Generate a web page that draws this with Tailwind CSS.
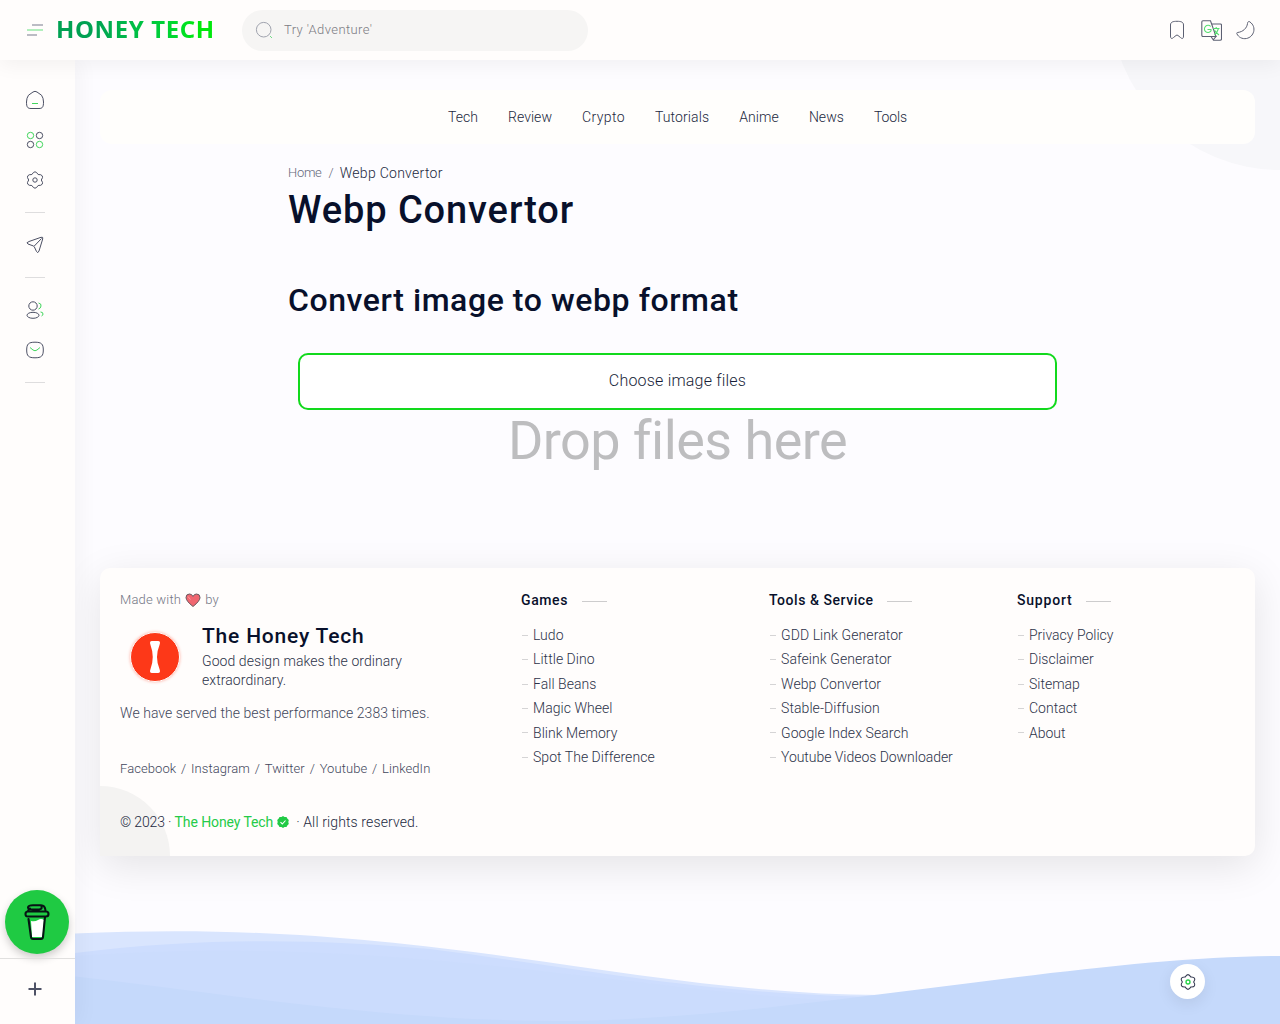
<!DOCTYPE html>
<html lang="en">
<head>
<meta charset="utf-8">
<title>Webp Convertor</title>
<script src="https://cdn.jsdelivr.net/npm/@tailwindcss/browser@4"></script>
</head>
<body class="relative h-screen overflow-hidden bg-[#fdfcff] font-['Roboto',sans-serif] text-sm font-light text-[#08102b]">
<!-- page decoration -->
<div class="absolute top-0 right-0 size-[170px] rounded-bl-full bg-[#f7f7fa]"></div>
<svg class="absolute bottom-0 left-[75px]" width="1205" height="100" viewBox="75 924 1205 100">
  <path fill="#d9e5fe" d="M75 933.5C230 927 350 935 510 957C640 975 760 995 880 995V1024H75Z"/>
  <path fill="#cdddfe" d="M75 953C210 936 330 940 430 949C580 968 700 994 880 997V1024H75Z"/>
  <path fill="#cbdcfd" d="M75 956C300 940 480 964 620 980C720 992 800 1000 860 1001V1024H75Z"/>
  <path fill="#c5d9fb" d="M75 976.5C200 990 380 1021 555 1021C780 1021 1080 956 1280 956V1024H75Z"/>
</svg>

<div class="flex h-full flex-col">
<header class="relative z-20 flex h-[60px] shrink-0 items-center bg-[#fffdfc] shadow-[0_5px_20px_rgba(0,0,0,0.05)]">
  <svg class="ml-[26px]" width="18" height="14" viewBox="0 0 18 14" fill="none" stroke-width="1.7"><path d="M6 2H17M1 12H11" stroke="#a5a7b1"/><path d="M1 7H17" stroke="#a5ecb2"/></svg>
  <h2 class="ml-3 w-[186px] bg-linear-to-r from-[#00a152] from-20% to-[#00e80c] to-75% bg-clip-text pb-0.5 font-['Noto_Sans'] text-2xl font-bold tracking-[0.62px] whitespace-nowrap text-transparent">HONEY TECH</h2>
  <div class="flex h-[41px] w-[346px] items-center rounded-full bg-[#f6f5f4] pl-[13px]">
    <svg width="18" height="18" viewBox="0 0 18 18" fill="none"><circle cx="8.7" cy="8.7" r="7.3" stroke="#a0a3ae"/><path d="M15 15L17 17" stroke="#70dc85"/></svg>
    <span class="ml-[11px] text-[13px] tracking-[0.4px] text-[#7b7b82]">Try 'Adventure'</span>
  </div>
  <div class="ml-auto mr-6 flex items-center gap-[13px] text-[#5c6072]">
    <svg width="22" height="22" viewBox="0 0 22 22" fill="none" stroke="currentColor" stroke-width="1"><path d="M4.500 17V6C4.500 3 7 2.300 11 2.300S17.500 3 17.500 6V17C17.500 20 16 20 14.500 18.500L12 16.500Q11 15.500 10 16.500L7.500 18.500C6 20 4.500 20 4.500 17Z"/></svg>
    <svg width="21" height="21" viewBox="0 0 21 21" fill="none" stroke-width="1.100"><path stroke="currentColor" d="M10.500 4H19.500Q20.500 4 20.500 5V19Q20.500 20.300 19 20.300H12.500L10 16.500M12 20L15 16.500H2Q.8 16.500.8 15V2Q.8.7 2 .7H9.500L15 16.500"/><path stroke="#55de70" d="M9.700 6.500A3.600 3.600 0 1 0 9.800 11.200Q10.300 10.500 10 9.500H6.500M12 8.500H18.500M15.200 7V8.500M17.500 8.500Q16 13 13.500 15M13.500 10Q15 13 18 15"/></svg>
    <svg width="21" height="20" viewBox="0 0 21 20" fill="none" stroke="currentColor" stroke-width="1"><path d="M2.500 12.500C8 12 12 8 12.500 3.500C12.700 1.500 14 1 15 2C22 7 19 17 11.500 18.500C7 19.300 3.500 17 2 14C1.500 13 1.700 12.600 2.500 12.500Z"/></svg>
  </div>
</header>

<div class="flex min-h-0 flex-1">
<aside class="relative z-10 flex w-[75px] shrink-0 flex-col bg-[#fffdfc] text-[#4c5064] shadow-[5px_0_20px_rgba(0,0,0,0.04)]">
  <nav class="flex w-[70px] flex-col items-center pt-[30px]">
    <svg class="mb-5" width="20" height="20" viewBox="0 0 20 20" fill="none"><path stroke="currentColor" d="M3.500 5.200L8 2Q10 .6 12 2L16.500 5.200Q18.500 8 18.500 12C18.500 17 17.500 18.500 14 18.500H6C2.500 18.500 1.500 17 1.500 12Q1.500 8 3.500 5.200Z"/><path stroke="#42d65d" d="M7 13.500H13"/></svg>
    <svg class="mb-5" width="20" height="20" viewBox="0 0 20 20" fill="none"><g stroke="#42d65d"><circle cx="5.500" cy="5.500" r="3.200"/><circle cx="14.500" cy="14.500" r="3.200"/></g><g stroke="currentColor"><circle cx="14.500" cy="5.500" r="3.200"/><circle cx="5.500" cy="14.500" r="3.200"/></g></svg>
    <svg width="20" height="20" viewBox="0 0 20 20" fill="none" stroke="currentColor"><path d="M10 1.800Q11.600 1.800 13.100 4.500Q16.300 4.300 17.300 5.900Q18.200 7.300 16.300 10Q18.200 12.700 17.300 14.100Q16.300 15.700 13.100 15.500Q11.600 18.200 10 18.200T6.900 15.500Q3.700 15.700 2.700 14.100Q1.800 12.700 3.700 10Q1.800 7.300 2.700 5.900Q3.700 4.300 6.900 4.500Q8.400 1.800 10 1.800Z"/><circle cx="10" cy="10" r="2.200"/></svg>
    <div class="mt-[22px] h-px w-5 bg-[#deddde]"></div>
    <svg class="my-[22px]" width="20" height="20" viewBox="0 0 20 20" fill="none" stroke="currentColor"><path d="M4 6.500L16 2.300Q18.400 1.600 17.700 4L14 16Q12.800 19 11.500 16.500L9.300 11.800Q9 11.200 8 10.800L3 9Q.5 7.700 4 6.500ZM9.300 11L16.500 3.500"/></svg>
    <div class="h-px w-5 bg-[#deddde]"></div>
    <svg class="mt-[22px] mb-5" width="20" height="20" viewBox="0 0 20 20" fill="none"><g stroke="currentColor"><circle cx="8" cy="6" r="4.200"/><ellipse cx="8" cy="15.300" rx="6" ry="3"/></g><path stroke="#42d65d" d="M13.500 3Q16.500 3.500 16 6Q15.700 8.500 13.500 9M15.500 12Q18 12 18 14Q18 15.500 16.500 16"/></svg>
    <svg width="20" height="20" viewBox="0 0 20 20" fill="none"><path stroke="currentColor" d="M1.700 10C1.700 4 3.500 2.200 10 2.200S18.300 4 18.300 10S16.500 17.800 10 17.800S1.700 16 1.700 10Z"/><path stroke="#42d65d" d="M5 7.500L8 10Q10 11.500 12 10L15 7.500"/></svg>
    <div class="mt-[22px] h-px w-5 bg-[#deddde]"></div>
  </nav>
  <div class="mt-auto ml-[5px] mb-1 flex size-16 items-center justify-center rounded-full bg-[#1fca43] shadow-[0_4px_8px_rgba(0,0,0,0.2)]">
    <svg width="26" height="38" viewBox="0 0 26 38" fill="none"><path fill="#fff" d="M7 18Q11 19 14 17Q17 15 20 17L18.500 34H8Z"/><path stroke="#071414" stroke-width="2.100" stroke-linecap="round" stroke-linejoin="round" d="M4.500 16L7 34Q7.200 36 9 36H17Q18.800 36 19 34L21 14M4 8.500H22Q24.500 8.500 24.500 11T22 13.500H4Q1.500 13.500 1.500 11T4 8.500M4 8Q4.500 6 6 5.500M9 2.300H17Q21 2.300 21.500 7.500M9 6.500H15Q18.500 6 17.500 4M9 2.300Q4 2.300 4 4.500Q4 6.500 9 6.500"/></svg>
  </div>
  <div class="flex h-[66px] items-center border-t border-[#e1e0df] pb-[5px] pl-7">
    <svg width="14" height="14" viewBox="0 0 14 14"><path d="M7 .5V13.500M.5 7H13.500" stroke="#4e5266" stroke-width="2"/></svg>
  </div>
</aside>

<main class="relative flex flex-1 flex-col px-[25px] pt-[30px]">
  <nav class="flex h-[54px] items-center justify-center gap-[30px] rounded-xl bg-[#fffefc] text-[14px] font-[350] text-[#222840]">
    <a class="tracking-[0.05px]">Tech</a><a class="tracking-[0.05px]">Review</a><a class="tracking-[0.4px]">Crypto</a><a class="tracking-[0.1px]">Tutorials</a><a class="tracking-[0.1px]">Anime</a><a class="tracking-[0.05px]">News</a><a class="tracking-[-0.1px]">Tools</a>
  </nav>
  <section class="mx-auto h-[424px] w-[779px]">
    <div class="mt-[19px] flex h-5 items-center text-[13px] text-[#65697b]"><span class="tracking-[-0.3px]">Home</span><span class="ml-[7px]">/</span><span class="ml-[6px] text-sm font-[350] tracking-[0.28px] text-[#222840]">Webp Convertor</span></div>
    <h1 class="mt-[3px] text-[38px] leading-[48px] font-medium tracking-[0.9px]">Webp Convertor</h1>
    <h2 class="mt-[45px] text-[32px] leading-[42px] font-medium tracking-[0.57px]">Convert image to webp format</h2>
    <div class="mx-2.5 mt-[32px] flex h-[57px] items-center justify-center rounded-[10px] border-2 border-[#12d91d] bg-white pb-0.5 text-base font-[350] tracking-[0.2px] text-[#171e38]">Choose image files</div>
    <p class="text-center text-[54px] leading-[62px] font-[380] tracking-[-0.55px] text-[#bdbdbf]">Drop files here</p>
  </section>

  <footer class="relative grid h-[288px] grid-cols-[371px_218px_218px_218px] gap-[30px] overflow-visible rounded-[10px] bg-[#fffdfc] px-5 pt-5 shadow-[0_10px_40px_rgba(0,0,0,0.1)]">
    <div class="absolute bottom-0 left-0 size-[70px] rounded-tr-full rounded-bl-[10px] bg-[#f4f3f2]"></div>
    <div class="relative whitespace-nowrap">
      <p class="flex h-6 items-center text-[13px] tracking-[0.2px] text-[#737684]">Made with
        <svg class="mx-1" width="16" height="15" viewBox="0 0 16 15"><path fill="#f06670" stroke="#67595f" d="M8 13.500Q1 8 1 4.500Q1 1 4.500 1Q7 1 8 3.500Q9 1 11.500 1Q15 1 15 4.500Q15 8 8 13.500Z"/><path d="M3 3.500L5.500 6.500" stroke="#ff9e9b"/></svg>by</p>
      <div class="mt-[11px] flex h-[67px]">
        <div class="mt-[9px] ml-2.5 flex size-[50px] items-center justify-center rounded-full border border-[#fffdfc] bg-[#fd3818] shadow-[0_0_3px_#fd381866]"><svg width="12" height="34" viewBox="0 0 12 34"><path fill="#fff" d="M3 1H9Q12 1 10.500 5Q5.500 17 10.500 29Q12 33 9 33H3Q0 33 1.500 29Q6 17 1.500 5Q0 1 3 1Z"/></svg></div>
        <div class="ml-[22px] text-[14px] leading-[19px] font-[350] tracking-[0.07px] text-[#2c3249]"><h3 class="-mt-px mb-0.5 text-[21px] leading-[28px] font-medium tracking-[0.8px] text-[#08102b]">The Honey Tech</h3><p>Good design makes the ordinary<br>extraordinary.</p></div>
      </div>
      <p class="mt-[13px] leading-5 tracking-[0.05px] text-[#41465b]">We have served the best performance 2383 times.</p>
      <p class="mt-[36px] flex gap-[4.800px] text-[13px] leading-5 tracking-[0.07px] text-[#41465b]"><a>Facebook</a><span>/</span><a>Instagram</a><span>/</span><a>Twitter</a><span>/</span><a>Youtube</a><span>/</span><a>LinkedIn</a></p>
      <p class="mt-[33px] flex items-center leading-5 font-[350] text-[#222840]"><span class="tracking-[-0.15px]">© 2023 ·&nbsp;</span><span class="font-[450] tracking-[-0.1px] text-[#25cb48]">The Honey Tech</span>
        <svg class="ml-1 mr-[7px]" width="12" height="12" viewBox="0 0 12 12"><path fill="#21ca45" d="M6 0L7.500 1L9.500.9L10.300 2.600L11.800 4L11.300 6L11.800 8L10.300 9.400L9.500 11.100L7.500 11L6 12L4.500 11L2.500 11.100L1.700 9.400L.2 8L.7 6L.2 4L1.700 2.600L2.500.9L4.500 1Z"/><path d="M3.500 6.200L5.300 8L8.500 4.500" fill="none" stroke="#fff" stroke-width="1.100"/></svg><span class="tracking-[0.12px]">· All rights reserved.</span></p>
    </div>
    <div>
      <h4 class="flex h-6 items-center text-[14px] font-medium tracking-[0.6px]">Games<i class="ml-[14px] mt-0.5 h-px w-[25px] bg-[#cdcccd]"></i></h4>
      <ul class="mt-[11px] font-[350] leading-[24.4px] tracking-[0.04px] text-[#2c3249]">
        <li class="flex items-center gap-[5px]"><i class="ml-px h-px w-1.5 bg-[#d5d4d5]"></i>Ludo</li><li class="flex items-center gap-[5px]"><i class="ml-px h-px w-1.5 bg-[#d5d4d5]"></i>Little Dino</li><li class="flex items-center gap-[5px]"><i class="ml-px h-px w-1.5 bg-[#d5d4d5]"></i>Fall Beans</li><li class="flex items-center gap-[5px]"><i class="ml-px h-px w-1.5 bg-[#d5d4d5]"></i>Magic Wheel</li><li class="flex items-center gap-[5px]"><i class="ml-px h-px w-1.5 bg-[#d5d4d5]"></i>Blink Memory</li><li class="flex items-center gap-[5px]"><i class="ml-px h-px w-1.5 bg-[#d5d4d5]"></i>Spot The Difference</li>
      </ul>
    </div>
    <div>
      <h4 class="flex h-6 items-center text-[14px] font-medium tracking-[0.54px]">Tools &amp; Service<i class="ml-[13px] mt-0.5 h-px w-[25px] bg-[#cdcccd]"></i></h4>
      <ul class="mt-[11px] font-[350] leading-[24.4px] tracking-[0.08px] text-[#2c3249]">
        <li class="flex items-center gap-[5px]"><i class="ml-px h-px w-1.5 bg-[#d5d4d5]"></i>GDD Link Generator</li><li class="flex items-center gap-[5px]"><i class="ml-px h-px w-1.5 bg-[#d5d4d5]"></i>Safeink Generator</li><li class="flex items-center gap-[5px]"><i class="ml-px h-px w-1.5 bg-[#d5d4d5]"></i>Webp Convertor</li><li class="flex items-center gap-[5px]"><i class="ml-px h-px w-1.5 bg-[#d5d4d5]"></i>Stable-Diffusion</li><li class="flex items-center gap-[5px]"><i class="ml-px h-px w-1.5 bg-[#d5d4d5]"></i>Google Index Search</li><li class="flex items-center gap-[5px]"><i class="ml-px h-px w-1.5 bg-[#d5d4d5]"></i><span class="tracking-[-0.04px]">Youtube Videos Downloader</span></li>
      </ul>
    </div>
    <div>
      <h4 class="flex h-6 items-center text-[14px] font-medium tracking-[0.8px]">Support<i class="ml-[13px] mt-0.5 h-px w-[25px] bg-[#cdcccd]"></i></h4>
      <ul class="mt-[11px] font-[350] leading-[24.4px] text-[#2c3249]">
        <li class="flex items-center gap-[5px]"><i class="ml-px h-px w-1.5 bg-[#d5d4d5]"></i>Privacy Policy</li><li class="flex items-center gap-[5px]"><i class="ml-px h-px w-1.5 bg-[#d5d4d5]"></i>Disclaimer</li><li class="flex items-center gap-[5px]"><i class="ml-px h-px w-1.5 bg-[#d5d4d5]"></i>Sitemap</li><li class="flex items-center gap-[5px]"><i class="ml-px h-px w-1.5 bg-[#d5d4d5]"></i>Contact</li><li class="flex items-center gap-[5px]"><i class="ml-px h-px w-1.5 bg-[#d5d4d5]"></i>About</li>
      </ul>
    </div>
  </footer>
</main>
</div>
</div>

<!-- floating settings button -->
<button class="absolute right-[75px] bottom-[25px] flex size-[35px] items-center justify-center rounded-full bg-white shadow-[0_5px_15px_rgba(0,0,0,0.08)]">
  <svg width="18" height="18" viewBox="0 0 20 20" fill="none" stroke="#30364d" stroke-width="1.200"><path d="M10 1.800Q11.600 1.800 13.100 4.500Q16.300 4.300 17.300 5.900Q18.200 7.300 16.300 10Q18.200 12.700 17.300 14.100Q16.300 15.700 13.100 15.500Q11.600 18.200 10 18.200T6.900 15.500Q3.700 15.700 2.700 14.100Q1.800 12.700 3.700 10Q1.800 7.300 2.700 5.900Q3.700 4.300 6.900 4.500Q8.400 1.800 10 1.800Z"/><circle cx="10" cy="10" r="2.200" stroke="#27d348" stroke-width="1.500"/></svg>
</button>
</body>
</html>
